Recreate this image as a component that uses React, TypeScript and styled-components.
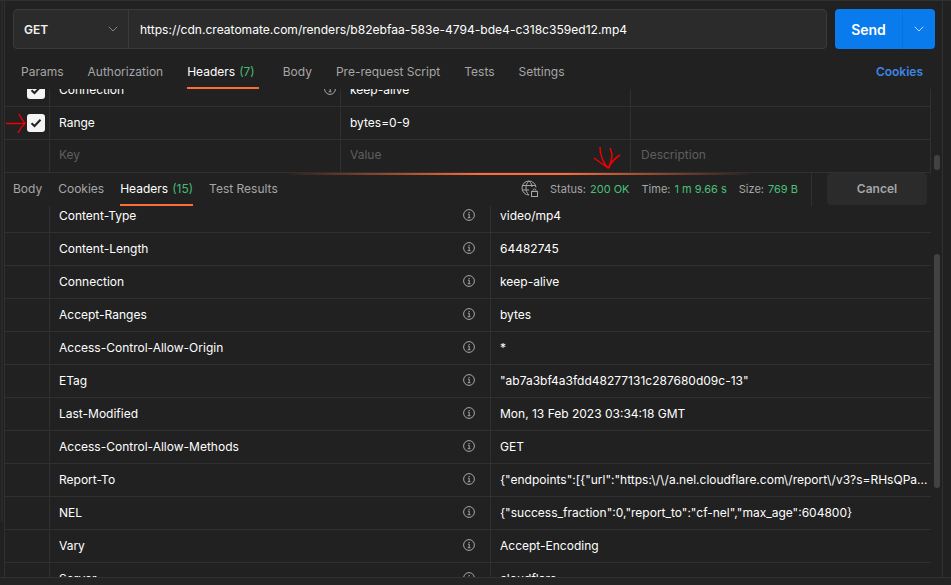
import React from "react";
import styled, { createGlobalStyle } from "styled-components";
import { ChevronDown } from "lucide-react";

const GlobalStyle = createGlobalStyle`
  html, body {
    margin: 0;
    padding: 0;
    background: #212121;
    overflow: hidden;
  }
  body {
    font-family: Inter, "Liberation Sans", sans-serif;
  }
`;

const requestRows = [
  { key: "Connection", value: "keep-alive", checked: true, info: true, clipped: true },
  { key: "Range", value: "bytes=0-9", checked: true },
  { key: "Key", value: "Value", description: "Description", placeholder: true },
];

const responseRows = [
  ["Content-Type", "video/mp4"],
  ["Content-Length", "64482745"],
  ["Connection", "keep-alive"],
  ["Accept-Ranges", "bytes"],
  ["Access-Control-Allow-Origin", "*"],
  ["ETag", '"ab7a3bf4a3fdd48277131c287680d09c-13"'],
  ["Last-Modified", "Mon, 13 Feb 2023 03:34:18 GMT"],
  ["Access-Control-Allow-Methods", "GET"],
  ["Report-To", '{"endpoints":[{"url":"https:\\/\\/a.nel.cloudflare.com\\/report\\/v3?s=RHsQPa...'],
  ["NEL", '{"success_fraction":0,"report_to":"cf-nel","max_age":604800}'],
  ["Vary", "Accept-Encoding"],
  ["Server", "cloudflare"],
];

const InfoIcon = () => (
  <InfoSvg viewBox="0 0 12 12">
    <circle cx="6" cy="6" r="5.4" fill="none" stroke="#a6a6a6" strokeWidth="1" />
    <path d="M4.9 5.2H6.2V8.6M4.7 8.7H7.4" fill="none" stroke="#a6a6a6" strokeWidth="1" />
    <rect x="5.6" y="3" width="1.1" height="1.1" fill="#a6a6a6" />
  </InfoSvg>
);

const GlobeLock = () => (
  <svg width="17" height="17" viewBox="0 0 17 17" fill="none" stroke="#a6a6a6" strokeWidth="1">
    <path d="M15 7.5A7 7 0 1 0 8 15" />
    <path d="M1.3 5.5H14.6M1.3 10H8" />
    <path d="M8 1C5.6 3 5 5.5 5 8s.6 5 3 7M8 1c2.4 2 3 4 3 6" />
    <rect x="10.5" y="11.5" width="6" height="5" fill="#212121" />
    <path d="M12 11.5V10.5a1.5 1.5 0 0 1 3 0v1" />
  </svg>
);

const Check = () => (
  <svg width="12" height="10" viewBox="0 0 12 10" fill="none">
    <path d="M1.5 5.2L4.5 8L10.5 1.8" stroke="#212121" strokeWidth="2" />
  </svg>
);

export default function App() {
  return (
    <Page>
      <GlobalStyle />
      <TopBar>
        <UrlGroup>
          <MethodBox>
            <span>GET</span>
            <ChevronDown size={16} color="#a6a6a6" strokeWidth={1.1} />
          </MethodBox>
          <UrlInput>https://cdn.creatomate.com/renders/b82ebfaa-583e-4794-bde4-c318c359ed12.mp4</UrlInput>
        </UrlGroup>
        <SendButton>
          <SendLabel>Send</SendLabel>
          <SendCaret>
            <ChevronDown size={16} color="#fff" strokeWidth={1.1} />
          </SendCaret>
        </SendButton>
      </TopBar>

      <RequestTabs>
        <Tab>Params</Tab>
        <Tab>Authorization</Tab>
        <Tab $active $trail>
          Headers <Count>(7)</Count>
        </Tab>
        <Tab>Body</Tab>
        <Tab>Pre-request Script</Tab>
        <Tab>Tests</Tab>
        <Tab>Settings</Tab>
        <CookiesLink>Cookies</CookiesLink>
      </RequestTabs>

      <RequestTable>
        {requestRows.map((row) => (
          <RequestRow key={row.key} $clipped={row.clipped}>
            <CheckCell>
              {row.checked && (
                <CheckBox>
                  <Check />
                </CheckBox>
              )}
            </CheckCell>
            <KeyCell $placeholder={row.placeholder}>
              <span>{row.key}</span>
              {row.info && <InfoIcon />}
            </KeyCell>
            <ValueCell $placeholder={row.placeholder}>{row.value}</ValueCell>
            <DescriptionCell>{row.description}</DescriptionCell>
          </RequestRow>
        ))}
        <RequestScroll />
      </RequestTable>

      <ResponseBar>
        <ResponseTab>Body</ResponseTab>
        <ResponseTab>Cookies</ResponseTab>
        <ResponseTab $active>
          Headers <Count>(15)</Count>
        </ResponseTab>
        <ResponseTab>Test Results</ResponseTab>
        <StatusGroup>
          <GlobeLock />
          <Metric>
            Status: <Good>200 OK</Good>
          </Metric>
          <Metric>
            Time: <Good>1 m 9.66 s</Good>
          </Metric>
          <Metric>
            Size: <Good>769 B</Good>
          </Metric>
        </StatusGroup>
        <CancelSlot>
          <CancelButton>Cancel</CancelButton>
        </CancelSlot>
        <RedArrowDown viewBox="0 0 32 26" fill="none">
          <path
            d="M4 13L18 23M10 2C10 8 11 15 18 23C21 18 25 13 30 10M20 3C21 6 22 8 22 10C22 14 20 19 19 23"
            stroke="#f00000"
            strokeWidth="1.5"
          />
        </RedArrowDown>
      </ResponseBar>

      <ResponseTable>
        {responseRows.map(([name, value]) => (
          <ResponseRow key={name}>
            <EmptyCell />
            <NameCell>
              <span>{name}</span>
              <InfoIcon />
            </NameCell>
            <ResponseValue>{value}</ResponseValue>
          </ResponseRow>
        ))}
        <ResponseScroll />
      </ResponseTable>
      <Footer />

      <RedArrowRight viewBox="0 0 20 21" fill="none">
        <path d="M0 10.5H19M13 1C15 5 17 8 19 10.5C16 13 14 16 12 20" stroke="#f00000" strokeWidth="1.4" />
      </RedArrowRight>
      <LeftStrip />
      <SideRule />
      <RightRule />
    </Page>
  );
}

const Page = styled.div`
  position: relative;
  width: 951px;
  height: 585px;
  display: flex;
  flex-direction: column;
  background: #212121;
  color: #fff;
  font-size: 12px;
  border-top: 1px solid #303030;
  box-sizing: border-box;
  overflow: hidden;
`;

const TopBar = styled.div`
  display: flex;
  gap: 8px;
  height: 40px;
  flex: none;
  margin: 8px 16px 0 13px;
`;

const UrlGroup = styled.div`
  flex: 1;
  display: flex;
  border: 1px solid #3a3a3a;
  border-radius: 4px;
  background: #2b2b2b;
`;

const MethodBox = styled.div`
  width: 115px;
  flex: none;
  display: flex;
  align-items: center;
  justify-content: space-between;
  padding: 0 7px 0 10px;
  box-sizing: border-box;
  border-right: 1px solid #3a3a3a;
  font-weight: 600;
  color: #f2f2f2;
`;

const UrlInput = styled.div`
  display: flex;
  align-items: center;
  padding-left: 11px;
  font-size: 12.05px;
  color: #fff;
`;

const SendButton = styled.div`
  width: 100px;
  flex: none;
  display: flex;
  border-radius: 4px;
  background: #097bed;
`;

const SendLabel = styled.div`
  flex: 1;
  display: flex;
  align-items: center;
  justify-content: center;
  font-size: 14px;
  font-weight: 600;
`;

const SendCaret = styled.div`
  width: 32px;
  display: flex;
  align-items: center;
  justify-content: center;
  border-left: 1px solid #0a72da;
`;

const RequestTabs = styled.div`
  height: 40px;
  flex: none;
  display: flex;
  align-items: stretch;
  gap: 24px;
  padding: 0 28px 0 21px;
`;

const Tab = styled.div<{ $active?: boolean; $trail?: boolean }>`
  display: flex;
  align-items: center;
  gap: 4px;
  padding-top: 5px;
  padding-right: ${(p) => (p.$trail ? "4px" : "0")};
  color: ${(p) => (p.$active ? "#fff" : "#a6a6a6")};
  box-shadow: ${(p) => (p.$active ? "inset 0 -2px 0 #ff6c37" : "none")};
`;

const Count = styled.span`
  color: #44bd72;
`;

const CookiesLink = styled.div`
  margin-left: auto;
  padding-top: 5px;
  display: flex;
  align-items: center;
  font-weight: 600;
  color: #3d86e6;
`;

const RequestTable = styled.div`
  position: relative;
  height: 84px;
  flex: none;
  display: flex;
  flex-direction: column;
  margin-left: 4px;
`;

const RequestRow = styled.div<{ $clipped?: boolean }>`
  height: ${(p) => (p.$clipped ? "18px" : "33px")};
  flex: none;
  display: grid;
  grid-template-columns: 46px 291px 290px 300px;
  grid-template-rows: ${(p) => (p.$clipped ? "17px" : "32px")};
  width: 927px;
  align-items: end;
  overflow: hidden;
  box-sizing: border-box;
  border-bottom: 1px solid #303030;
`;

const CheckCell = styled.div`
  display: flex;
  align-items: center;
  justify-content: flex-end;
  height: 32px;
  box-sizing: border-box;
  padding-right: 4px;
  border-right: 1px solid #303030;
`;

const CheckBox = styled.div`
  width: 18px;
  height: 18px;
  display: flex;
  align-items: center;
  justify-content: center;
  border-radius: 3px;
  background: #f4f4f4;
`;

const KeyCell = styled.div<{ $placeholder?: boolean }>`
  display: flex;
  align-items: center;
  justify-content: space-between;
  height: 32px;
  box-sizing: border-box;
  padding: 0 4px ${(p) => (p.$placeholder ? "4px" : "2px")} 9px;
  border-right: 1px solid #303030;
  color: ${(p) => (p.$placeholder ? "#5f5f5f" : "#fff")};
`;

const ValueCell = styled.div<{ $placeholder?: boolean }>`
  display: flex;
  align-items: center;
  height: 32px;
  box-sizing: border-box;
  padding: 0 0 ${(p) => (p.$placeholder ? "4px" : "2px")} 9px;
  border-right: 1px solid #303030;
  color: ${(p) => (p.$placeholder ? "#5f5f5f" : "#fff")};
`;

const DescriptionCell = styled.div`
  display: flex;
  align-items: center;
  height: 32px;
  box-sizing: border-box;
  padding: 0 0 4px 10px;
  border-right: 1px solid #303030;
  color: #5f5f5f;
`;

const InfoSvg = styled.svg`
  width: 12px;
  height: 12px;
  flex: none;
`;

const ResponseBar = styled.div`
  position: relative;
  height: 33px;
  flex: none;
  display: flex;
  align-items: stretch;
  gap: 16px;
  margin: 0 8px 0 4px;
  padding-left: 9px;
  box-sizing: border-box;

  &::before {
    content: "";
    position: absolute;
    left: 279px;
    top: 0;
    width: 470px;
    height: 2px;
    background: linear-gradient(90deg, rgba(255, 108, 55, 0), #ff6c37 42%, #ff6c37 60%, rgba(255, 108, 55, 0));
  }
`;

const ResponseTab = styled(Tab)`
  padding-top: 0;
  padding-bottom: 2px;
`;

const StatusGroup = styled.div`
  margin-left: auto;
  display: flex;
  align-items: center;
  gap: 12px;
  padding: 0 13px 2px 0;
`;

const Metric = styled.span`
  display: inline-flex;
  gap: 4px;
  font-size: 11px;
  color: #a6a6a6;
`;

const Good = styled.span`
  color: #49c078;
`;

const CancelSlot = styled.div`
  width: 132px;
  flex: none;
  margin-left: -16px;
  box-sizing: border-box;
  padding-left: 15px;
  border-left: 1px solid #303030;
`;

const CancelButton = styled.div`
  width: 100px;
  height: 32px;
  box-sizing: border-box;
  padding-bottom: 2px;
  display: flex;
  align-items: center;
  justify-content: center;
  border-radius: 4px;
  background: #2b2b2b;
  font-weight: 600;
  color: #a6a6a6;
`;

const ResponseTable = styled.div`
  position: relative;
  height: 371px;
  flex: none;
  margin-left: 4px;
  overflow: hidden;
`;

const ResponseRow = styled.div`
  height: 33px;
  width: 927px;
  display: grid;
  grid-template-columns: 46px 441px 440px;
  grid-template-rows: 32px;
  align-items: end;
  overflow: hidden;
  box-sizing: border-box;
  border-bottom: 1px solid #303030;
  &:first-child {
    height: 27px;
    grid-template-rows: 26px;
  }
`;

const EmptyCell = styled.div`
  height: 32px;
  border-right: 1px solid #303030;
`;

const NameCell = styled.div`
  display: flex;
  align-items: center;
  justify-content: space-between;
  height: 32px;
  box-sizing: border-box;
  padding: 0 15px 2px 9px;
  border-right: 1px solid #303030;
`;

const ResponseValue = styled.div`
  display: flex;
  align-items: center;
  height: 32px;
  box-sizing: border-box;
  padding: 0 0 2px 9px;
  white-space: nowrap;
`;

const Footer = styled.div`
  flex: 1;
  border-top: 1px solid #303030;
  background: #242424;
`;

const RequestScroll = styled.div`
  position: absolute;
  right: 11px;
  top: 66px;
  width: 6px;
  height: 15px;
  border-radius: 3px;
  background: #424242;
`;

const ResponseScroll = styled.div`
  position: absolute;
  right: 11px;
  top: 48px;
  width: 6px;
  height: 234px;
  border-radius: 3px;
  background: #424242;
`;

const RedArrowDown = styled.svg`
  position: absolute;
  left: 586px;
  top: -28px;
  width: 32px;
  height: 26px;
`;

const RedArrowRight = styled.svg`
  position: absolute;
  left: 6px;
  top: 112px;
  width: 20px;
  height: 21px;
`;

const LeftStrip = styled.div`
  position: absolute;
  left: 1px;
  top: 0;
  width: 2px;
  height: 520px;
  background: #2a2a2a;
`;

const SideRule = styled.div`
  position: absolute;
  left: 4px;
  top: 0;
  height: 576px;
  width: 1px;
  background: #303030;
`;

const RightRule = styled.div`
  position: absolute;
  left: 942px;
  top: 0;
  height: 576px;
  width: 1px;
  background: #303030;
`;
